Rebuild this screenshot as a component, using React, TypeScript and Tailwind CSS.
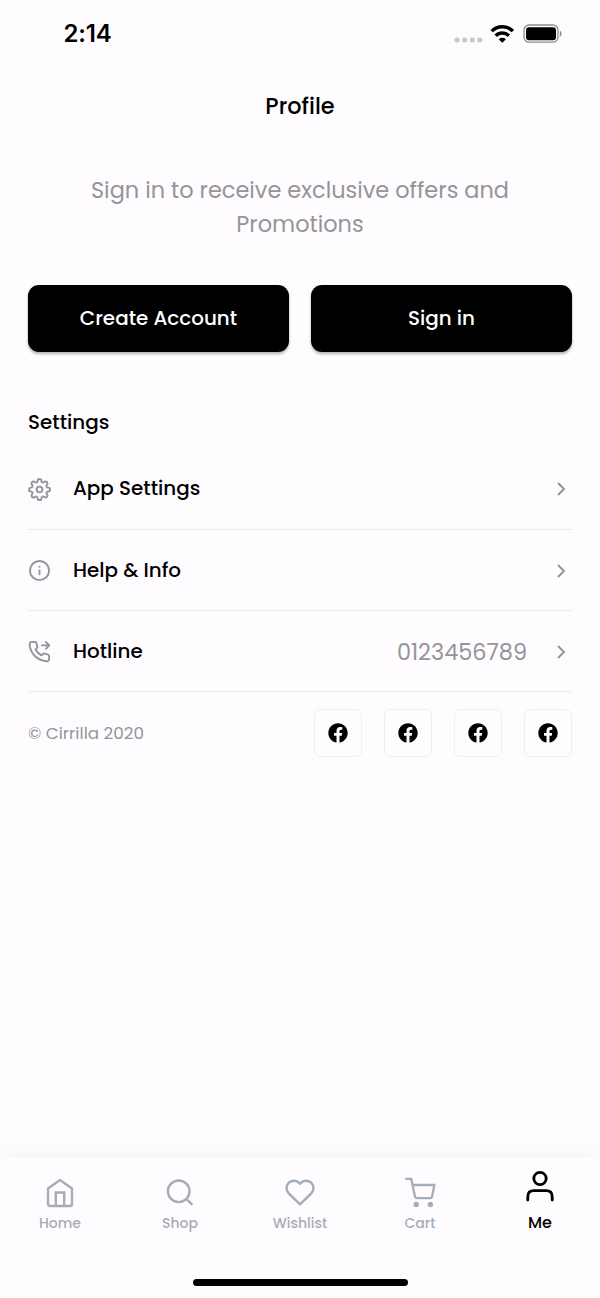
import React from 'react';
import { FiInfo, FiSettings } from 'react-icons/fi';
import { FaFacebook } from 'react-icons/fa';

interface IconProps {
  className?: string;
}

function PhoneForward({ className }: IconProps) {
  return (
    <svg viewBox="0 0 24 24" className={className} fill="none" stroke="currentColor" strokeWidth="2" strokeLinecap="round" strokeLinejoin="round">
      <path d="M14.5 5.6H22M18.6 2l3.6 3.6-3.6 3.6" />
      <path d="M22 17v3.2a2 2 0 0 1-2.2 2C10 21.8 2 14 1.7 4.2A2 2 0 0 1 3.7 2H7a2 2 0 0 1 2 1.7c.1 1 .3 1.9.7 2.8a2 2 0 0 1-.5 2.1L7.9 9.9a16 16 0 0 0 6.2 6.2l1.3-1.3a2 2 0 0 1 2.1-.5c.9.4 1.8.6 2.8.7A2 2 0 0 1 22 17z" />
    </svg>
  );
}

function Chevron() {
  return (
    <svg viewBox="0 0 10 16" className="mr-[6px] h-4 w-[10px] shrink-0" fill="none" stroke="currentColor" strokeWidth="1.9">
      <path d="M2 2l6 6-6 6" />
    </svg>
  );
}

function HomeIcon() {
  return (
    <svg viewBox="0 0 32 32" className="size-8" fill="none" stroke="currentColor" strokeWidth="2.4" strokeLinejoin="round">
      <path d="M16 3L28 11.5V27a2 2 0 0 1-2 2H6a2 2 0 0 1-2-2V11.5z" />
      <path d="M11.8 29V15.5h8.4V29" strokeLinejoin="miter" />
    </svg>
  );
}

function SearchIcon() {
  return (
    <svg viewBox="0 0 32 32" className="size-8" fill="none" stroke="currentColor" strokeWidth="2.4" strokeLinecap="round">
      <circle cx="14.7" cy="14.3" r="10.8" />
      <path d="M22.5 22L27.7 27.2" />
    </svg>
  );
}

function HeartIcon() {
  return (
    <svg viewBox="0 0 32 32" className="size-8" fill="none" stroke="currentColor" strokeWidth="2.4" strokeLinejoin="round">
      <path d="M16 27.3L4.7 16.3a7.4 7.4 0 0 1 .2-10.6 7.7 7.7 0 0 1 10.2.1L16 6.8l.9-1a7.7 7.7 0 0 1 10.2-.1 7.4 7.4 0 0 1 .2 10.6z" />
    </svg>
  );
}

function CartIcon() {
  return (
    <svg viewBox="0 0 32 32" className="size-8" fill="none" stroke="currentColor" strokeWidth="2.3" strokeLinecap="round" strokeLinejoin="round">
      <path d="M2 1.8h5.2L11 19.5q.4 1.7 2 1.7h13.2q1.5 0 1.8-1.5L30.4 8H8.600" />
      <circle cx="12.2" cy="27.5" r="2.7" fill="currentColor" stroke="none" />
      <circle cx="26.4" cy="27.5" r="2.7" fill="currentColor" stroke="none" />
    </svg>
  );
}

function UserIcon() {
  return (
    <svg viewBox="0 0 32 32" className="size-8" fill="none" stroke="currentColor" strokeWidth="2.8" strokeLinecap="round">
      <circle cx="16" cy="8.5" r="6.2" />
      <path d="M3.8 30v-3.3q0-6 6-6h12.4q6 0 6 6V30" />
    </svg>
  );
}

function StatusBar() {
  return (
    <div className="flex h-[70px] items-start justify-between pl-[63.500px] pr-[38px] pt-[18px]">
      <span className="font-['Inter',sans-serif] text-[24px] font-semibold leading-8 tracking-[-0.2px]">2:14</span>
      <div className="flex pt-[6px]">
        <svg viewBox="0 0 30 20" className="mr-[6px] h-5 w-[30px]" fill="#cbc9cc">
          <rect x="0.5" y="13.5" width="5" height="5" rx="1.8" />
          <rect x="8.2" y="13.5" width="5" height="5" rx="1.8" />
          <rect x="15.9" y="13.5" width="5" height="5" rx="1.8" />
          <rect x="23.3" y="13.5" width="5" height="5" rx="1.8" />
        </svg>
        <svg viewBox="0 0 24 20" className="mr-[9px] h-5 w-6" fill="none" stroke="#000" strokeWidth="3.4">
          <path d="M1.7 7.1A15 15 0 0 1 22.9 7.1" />
          <path d="M5.7 11.7A9.400 9.4 0 0 1 18.9 11.7" />
          <path d="M12.3 18.8L8.7 15.2Q12.3 12.300 15.900 15.2z" fill="#000" stroke="none" />
        </svg>
        <svg viewBox="0 0 39 20" className="h-5 w-[39px]">
          <rect x="1" y="1" width="34" height="17.2" rx="5" fill="none" stroke="#8d8c8e" strokeWidth="1.3" />
          <rect x="3" y="3.2" width="30" height="13" rx="3" fill="#000" />
          <path d="M36.8 6.5q1.8 1 1.8 3.2t-1.8 3.2z" fill="#8d8c8e" />
        </svg>
      </div>
    </div>
  );
}

const rows = [
  { label: 'App Settings', icon: <FiSettings className="size-[23px]" /> },
  { label: 'Help & Info', icon: <FiInfo className="size-[23px]" /> },
  { label: 'Hotline', icon: <PhoneForward className="size-[23px]" />, value: '0123456789' },
];

const tabs = [
  { label: 'Home', icon: <HomeIcon /> },
  { label: 'Shop', icon: <SearchIcon /> },
  { label: 'Wishlist', icon: <HeartIcon /> },
  { label: 'Cart', icon: <CartIcon /> },
  { label: 'Me', icon: <UserIcon />, active: true },
];

export default function App() {
  return (
    <div className="flex h-[1298px] w-[600px] flex-col overflow-hidden bg-[#fefcff] font-['Poppins','Inter',sans-serif] text-black [font-feature-settings:'cv11']">
      <StatusBar />

      <h1 className="h-[72px] pt-[19px] text-center text-[22.4px] font-medium leading-[34px]">Profile</h1>

      <main className="flex-1 px-7 pt-[31px]">
        <p className="text-center text-[22.45px] leading-[34px] text-[#969498]">
          Sign in to receive exclusive offers and
          <br />
          Promotions
        </p>

        <div className="mt-[43.5px] grid grid-cols-2 gap-[22px]">
          <button className="h-[67px] rounded-[11px] bg-black text-[19.9px] font-medium leading-8 text-white shadow-[0_2px_3px_rgba(0,0,0,0.3)]">
            Create Account
          </button>
          <button className="h-[67px] rounded-[11px] bg-black text-[19.9px] font-medium leading-8 text-white shadow-[0_2px_3px_rgba(0,0,0,0.3)]">
            Sign in
          </button>
        </div>

        <h2 className="mt-[54.5px] h-[42.5px] text-[19.9px] font-medium leading-8">Settings</h2>

        {rows.map((row) => (
          <div key={row.label} className="flex h-[81.3px] items-center border-b border-[#ebeaed] pt-[1.5px] text-[#969498]">
            {row.icon}
            <span className="ml-[22px] pb-[2px] text-[19.9px] font-medium leading-8 text-black">{row.label}</span>
            <span className="ml-auto mr-[29px] text-[22.4px] leading-8">{row.value}</span>
            <Chevron />
          </div>
        ))}

        <div className="mt-[17px] flex items-center justify-between">
          <span className="text-[16.8px] text-[#969498]">© Cirrilla 2020</span>
          <div className="flex gap-[22px]">
            {[0, 1, 2, 3].map((i) => (
              <div key={i} className="flex size-12 items-center justify-center rounded-[6px] border-[1.5px] border-[#efeef1]">
                <FaFacebook size={20} />
              </div>
            ))}
          </div>
        </div>
      </main>

      <nav className="h-[140px] bg-[#fefcff] shadow-[0_-4px_16px_rgba(0,0,0,0.03)]">
        <div className="grid h-[121px] grid-cols-5">
          {tabs.map((tab) => (
            <div
              key={tab.label}
              className={`flex flex-col items-center ${tab.active ? 'pt-3 text-black' : 'pt-[19px] text-[#a5adb8]'}`}
            >
              {tab.icon}
              <span className={tab.active ? 'mt-[10.5px] text-[16px] font-medium leading-5' : 'mt-1 text-[14px] font-medium leading-5'}>{tab.label}</span>
            </div>
          ))}
        </div>
        <div className="mx-auto h-[7px] w-[215px] rounded-full bg-black" />
      </nav>
    </div>
  );
}
